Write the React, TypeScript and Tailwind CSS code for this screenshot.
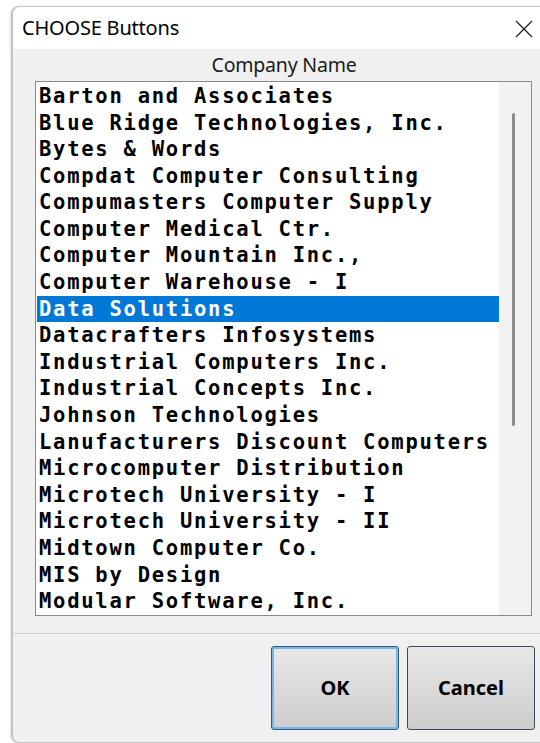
const companies = [
  "Barton and Associates",
  "Blue Ridge Technologies, Inc.",
  "Bytes & Words",
  "Compdat Computer Consulting",
  "Compumasters Computer Supply",
  "Computer Medical Ctr.",
  "Computer Mountain Inc.,",
  "Computer Warehouse - I",
  "Data Solutions",
  "Datacrafters Infosystems",
  "Industrial Computers Inc.",
  "Industrial Concepts Inc.",
  "Johnson Technologies",
  "Lanufacturers Discount Computers",
  "Microcomputer Distribution",
  "Microtech University - I",
  "Microtech University - II",
  "Midtown Computer Co.",
  "MIS by Design",
  "Modular Software, Inc.",
];

const selected = "Data Solutions";

export default function App() {
  return (
    <div className="h-[743px] w-[540px] overflow-hidden bg-white pl-[11px] pt-[6px] font-['Noto_Sans',sans-serif]">
      <div className="flex h-[737px] w-[560px] flex-col rounded-[8px] border border-l-2 border-[#c4c4c4] bg-[#f0f0f0] shadow-[-1px_0_2px_rgba(0,0,0,0.12)]">
        {/* title bar */}
        <div className="flex h-[42px] shrink-0 items-center justify-between rounded-t-[8px] bg-white pl-[9px] pr-[37px]">
          <span className="text-[20px] tracking-[-0.2px] text-black">CHOOSE Buttons</span>
          <svg width="18" height="18" viewBox="0 0 18 18" className="mt-px">
            <path d="M1 1L17 17M17 1L1 17" stroke="#222" strokeWidth="1.3" fill="none" />
          </svg>
        </div>

        <div className="flex w-[520px] flex-col pl-[22px]">
          <div className="flex h-[32px] items-center justify-center text-[19.5px] tracking-[-0.2px] text-[#1a1a1a]">
            Company Name
          </div>

          {/* list box */}
          <div className="flex h-[535px] w-[497px] border border-[#8a8a8a] bg-white">
            <div className="flex flex-1 flex-col pl-px pt-px">
              {companies.map((name) => (
                <div
                  key={name}
                  className={`flex h-[26.6px] items-center pl-[2px] font-['DejaVu_Sans_Mono',monospace] text-[20.5px] font-bold tracking-[1.75px] whitespace-nowrap ${
                    name === selected ? "bg-[#0078d7] text-white" : "text-black"
                  }`}
                >
                  {name}
                </div>
              ))}
            </div>
            <div className="w-[32px] shrink-0 bg-[#f2f2f2] pl-[13px] pt-[31px]">
              <div className="h-[313px] w-[3px] rounded-full bg-[#8c8c8c]" />
            </div>
          </div>
        </div>

        <div className="mt-[17px] h-px bg-[#d0d0d0]" />

        {/* buttons */}
        <div className="flex gap-[8px] pl-[258px] pt-[12px]">
          <button className="flex h-[84px] w-[128px] items-center justify-center rounded-[3px] border border-[#2d5c86] bg-gradient-to-b from-[#e8e8e8] to-[#cdcdcd] text-[20px] font-bold text-black shadow-[inset_0_0_0_2px_#79b5e6]">
            OK
          </button>
          <button className="flex h-[84px] w-[128px] items-center justify-center rounded-[3px] border border-[#3a4a5a] bg-gradient-to-b from-[#e8e8e8] to-[#cdcdcd] text-[20px] font-bold text-black">
            Cancel
          </button>
        </div>
      </div>
    </div>
  );
}
